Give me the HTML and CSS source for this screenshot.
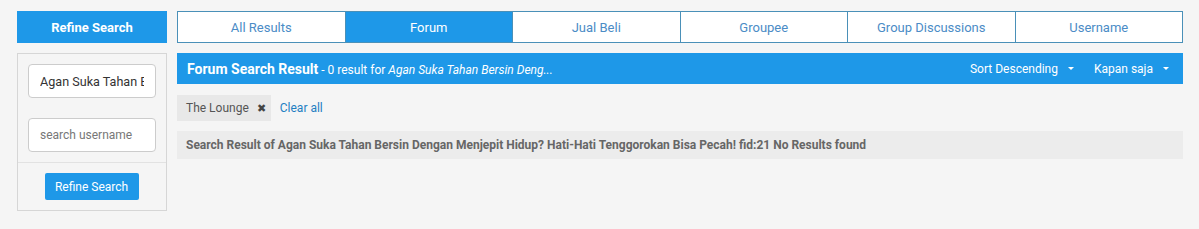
FILE: index.html
```html
<!DOCTYPE html>
<html>
<head>
<meta charset="utf-8">
<link rel="stylesheet" href="styles.css">
</head>
<body>
<div class="page">
  <aside class="sidebar">
    <div class="side-head">Refine Search</div>
    <div class="side-panel">
      <div class="side-fields">
        <input class="field value" type="text" value="Agan Suka Tahan Bersin Dengan Menjepit Hidup?">
        <input class="field" type="text" placeholder="search username">
      </div>
      <div class="side-foot">
        <button class="btn">Refine Search</button>
      </div>
    </div>
  </aside>
  <main class="main">
    <nav class="tabs">
      <a class="tab">All Results</a>
      <a class="tab active">Forum</a>
      <a class="tab">Jual Beli</a>
      <a class="tab">Groupee</a>
      <a class="tab">Group Discussions</a>
      <a class="tab">Username</a>
    </nav>
    <div class="bar">
      <div class="bar-title"><b>Forum Search Result</b><span class="sub"> - 0 result for <i>Agan Suka Tahan Bersin Deng...</i></span></div>
      <div class="bar-tools">
        <span class="dd">Sort Descending <span class="caret"></span></span>
        <span class="dd">Kapan saja <span class="caret"></span></span>
      </div>
    </div>
    <div class="filters">
      <span class="chip">The Lounge <span class="x">✖</span></span>
      <a class="clear">Clear all</a>
    </div>
    <div class="result">Search Result of Agan Suka Tahan Bersin Dengan Menjepit Hidup? Hati-Hati Tenggorokan Bisa Pecah! fid:21 No Results found</div>
  </main>
</div>
</body>
</html>
```
FILE: styles.css
```css
* { box-sizing: border-box; }
body {
  margin: 0;
  background: #f5f5f5;
  font-family: Roboto, "Liberation Sans", Arial, sans-serif;
  color: #555;
}
.page {
  display: flex;
  gap: 10px;
  padding: 11px 0 0 17px;
}
.sidebar { width: 150px; flex: none; }
.side-head {
  height: 32px;
  background: #1e98e8;
  color: #fff;
  font-weight: bold;
  font-size: 13px;
  display: flex;
  align-items: center;
  justify-content: center;
}
.side-panel {
  margin-top: 10px;
  border: 1px solid #d6d6d6;
  background: #f5f5f5;
}
.side-fields {
  padding: 10px 10px 10px;
  display: flex;
  flex-direction: column;
  gap: 20px;
  border-bottom: 1px solid #e2e2e2;
}
.field {
  width: 128px;
  height: 34px;
  border: 1px solid #ccc;
  border-radius: 4px;
  background: #fff;
  padding: 0 11px;
  font-family: inherit;
  font-size: 12px;
  color: #444;
  outline: none;
}
.field.value { font-size: 12.6px; color: #333; }
.field::placeholder { color: #777; }
.side-foot {
  padding: 10px 0 10px;
  display: flex;
  justify-content: center;
}
.btn {
  width: 94px;
  height: 27px;
  border: none;
  border-radius: 2px;
  background: #1e98e8;
  color: #fff;
  font-family: inherit;
  font-size: 12px;
  padding: 0;
  margin-left: -1px;
}
.main { width: 1006px; flex: none; }
.tabs {
  display: flex;
  height: 32px;
  border: 1px solid #4a90b8;
  background: #fff;
}
.tab {
  flex: 1;
  display: flex;
  align-items: center;
  justify-content: center;
  font-size: 13px;
  color: #4b8cc6;
  border-left: 1px solid #4a90b8;
}
.tab:first-child { border-left: none; }
.tab.active { background: #1e98e8; color: #fff; }
.bar {
  margin-top: 10px;
  height: 31px;
  background: #1e98e8;
  color: #fff;
  display: flex;
  align-items: center;
  justify-content: space-between;
  padding: 0 14px 0 10px;
}
.bar-title b { font-size: 14px; }
.bar-title .sub { font-size: 12px; }
.bar-tools { display: flex; gap: 20px; font-size: 12px; }
.dd { display: inline-flex; align-items: center; }
.caret {
  display: inline-block;
  width: 0; height: 0;
  border-left: 3px solid transparent;
  border-right: 3px solid transparent;
  border-top: 3px solid #fff;
  margin-left: 10px;
}
.filters {
  margin-top: 11px;
  display: flex;
  align-items: center;
  gap: 9px;
}
.chip {
  height: 26px;
  background: #e8e8e8;
  display: inline-flex;
  align-items: center;
  padding: 0 5px 0 9px;
  font-size: 12px;
  color: #555;
}
.chip .x { font-size: 11px; color: #444; margin-left: 8px; }
.clear { font-size: 12px; color: #1f7fc2; }
.result {
  margin-top: 10px;
  height: 28px;
  background: #ececec;
  display: flex;
  align-items: center;
  padding: 0 9px;
  font-size: 12px;
  font-weight: bold;
  color: #666;
}
```
